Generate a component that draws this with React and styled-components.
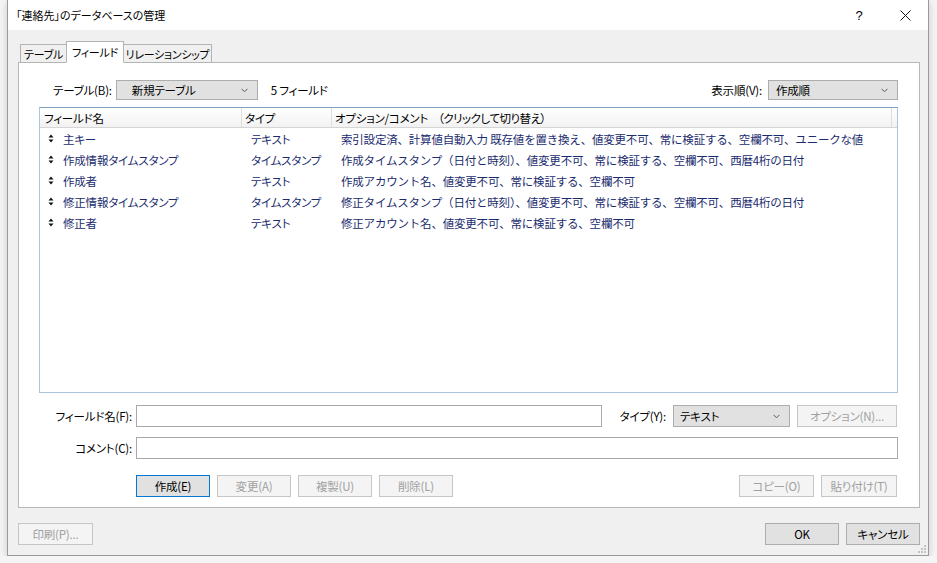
import React from 'react';
import styled, { createGlobalStyle } from 'styled-components';

const GlobalStyle = createGlobalStyle`
  *, *::before, *::after {
    box-sizing: border-box;
  }
  html, body {
    margin: 0;
    padding: 0;
    background: #f5f5f5;
  }
  body {
    font-family: "Noto Sans CJK JP", "Noto Sans", sans-serif;
    font-size: 11.5px;
    letter-spacing: -0.2px;
    font-feature-settings: "palt";
    color: #000;
  }
`;

const StyledWindow = styled.div`
  position: relative;
  width: 922px;
  margin-left: 7px;
  border: 1px solid #9a9a9a;
  border-top: none;
  background: #f0f0f0;
  box-shadow: 0 2px 8px rgba(0, 0, 0, 0.18);
`;

const StyledTitleBar = styled.div`
  display: flex;
  align-items: center;
  height: 30px;
  background: #fff;
  padding-left: 8px;
`;

const StyledTitle = styled.span`
  flex: 1;
  font-size: 11px;
  letter-spacing: 0;
`;

const StyledTitleButton = styled.div`
  display: flex;
  align-items: center;
  justify-content: center;
  width: 46px;
  height: 30px;
  font-family: "Liberation Sans", sans-serif;
  font-size: 13px;
`;

const StyledBody = styled.div`
  padding: 11px 8px 10px 10px;
`;

const StyledTabStrip = styled.div`
  display: flex;
  align-items: flex-end;
  height: 22px;
  margin: 0 0 -1px 2px;
  position: relative;
  z-index: 1;
`;

const StyledTab = styled.div`
  display: flex;
  align-items: center;
  justify-content: center;
  width: ${({ $width }) => $width}px;
  height: ${({ $active }) => ($active ? '22px' : '19px')};
  font-size: 11px;
  letter-spacing: -0.3px;
  background: ${({ $active }) => ($active ? '#fff' : '#f0f0f0')};
  border: 1px solid #b4b4b4;
  border-bottom: ${({ $active }) => ($active ? '1px solid #fff' : '1px solid #b4b4b4')};
  margin-left: ${({ $active }) => ($active ? '-1px' : '0')};
  margin-right: ${({ $active }) => ($active ? '-1px' : '0')};
  position: relative;
  z-index: ${({ $active }) => ($active ? 2 : 1)};
`;

const StyledPanel = styled.div`
  display: flex;
  flex-direction: column;
  height: 446px;
  padding: 17px 21px 10px 20px;
  background: #fff;
  border: 1px solid #b8b8b8;
`;

const StyledTopRow = styled.div`
  display: flex;
  align-items: center;
  height: 20px;
  padding-left: 14px;
`;

const StyledLabel = styled.span`
  white-space: nowrap;
  margin-right: ${({ $gap }) => $gap || 4}px;
`;

const StyledSelect = styled.div`
  display: flex;
  align-items: center;
  width: ${({ $width }) => $width}px;
  height: ${({ $height }) => $height || 20}px;
  padding: 0 9px 0 ${({ $pad }) => $pad || 6}px;
  background: #e1e1e1;
  border: 1px solid #adadad;
  span {
    flex: 1;
  }
`;

const StyledCount = styled.span`
  margin-left: 13px;
`;

const StyledSpacer = styled.div`
  flex: 1;
`;

const StyledList = styled.div`
  display: flex;
  flex-direction: column;
  height: 286px;
  margin-top: 7px;
  border: 1px solid #aac6de;
  border-top-color: #7f9fc0;
  background: #fff;
`;

const StyledHeader = styled.div`
  display: grid;
  grid-template-columns: 202px 90px 560px;
  height: 20px;
  border-bottom: 1px solid #d5d5d5;
  background: linear-gradient(#ffffff, #f2f2f2);
`;

const StyledHeaderCell = styled.div`
  display: flex;
  align-items: center;
  padding-left: ${({ $pad }) => $pad || 3}px;
  border-right: 1px solid #dedede;
  white-space: nowrap;
  span {
    margin-left: 10px;
    letter-spacing: -0.5px;
  }
`;

const StyledRow = styled.div`
  display: grid;
  grid-template-columns: 202px 90px 1fr;
  align-items: center;
  height: 21px;
  color: #1b2c6e;
  white-space: nowrap;
`;

const StyledNameCell = styled.div`
  display: flex;
  align-items: center;
  gap: 9px;
  padding-left: 8px;
`;

const StyledCell = styled.div`
  padding-left: 9px;
`;

const StyledOptionCell = styled.div`
  padding-left: 9px;
  font-feature-settings: normal;
`;

const StyledFormRow = styled.div`
  display: flex;
  align-items: center;
  height: 22px;
  margin-top: ${({ $top }) => $top}px;
  padding-right: ${({ $right }) => $right || 0}px;
`;

const StyledFormLabel = styled.span`
  width: 93px;
  margin-right: 4px;
  text-align: right;
  white-space: nowrap;
`;

const StyledInput = styled.div`
  height: 22px;
  width: ${({ $width }) => ($width ? `${$width}px` : 'auto')};
  flex: ${({ $width }) => ($width ? 'none' : 1)};
  background: #fff;
  border: 1px solid #a9a9a9;
`;

const StyledButtonRow = styled.div`
  display: flex;
  align-items: center;
  gap: 7px;
  height: 22px;
  margin-top: 16px;
  padding-left: 97px;
  padding-right: 1px;
`;

const StyledButton = styled.div`
  display: flex;
  align-items: center;
  justify-content: center;
  width: ${({ $width }) => $width || 74}px;
  height: 22px;
  margin-left: ${({ $left }) => $left || 0}px;
  white-space: nowrap;
  background: ${({ $disabled }) => ($disabled ? '#f4f4f4' : '#e1e1e1')};
  border: 1px solid
    ${({ $disabled, $default }) =>
      $default ? '#0078d7' : $disabled ? '#c6c6c6' : '#adadad'};
  color: ${({ $disabled }) => ($disabled ? '#a0a0a0' : '#000')};
`;

const StyledFooter = styled.div`
  display: flex;
  align-items: center;
  gap: 7px;
  height: 22px;
  margin-top: 15px;
`;

const StyledGrip = styled.svg`
  position: absolute;
  right: 2px;
  bottom: 2px;
`;

const Chevron = () => (
  <svg width="7" height="5" viewBox="0 0 7 5">
    <path d="M0.5 0.8 L3.5 3.8 L6.5 0.8" fill="none" stroke="#5a5a5a" strokeWidth="1" />
  </svg>
);

const SortIcon = () => (
  <svg width="6" height="9" viewBox="0 0 6 9">
    <path d="M3 0.5 L5.5 3.5 L0.5 3.5 Z M3 8.5 L5.5 5.5 L0.5 5.5 Z" fill="#111" />
  </svg>
);

const CloseIcon = () => (
  <svg width="11" height="11" viewBox="0 0 11 11">
    <path d="M0.5 0.5 L10.5 10.5 M10.5 0.5 L0.5 10.5" stroke="#111" strokeWidth="1" />
  </svg>
);

const fields = [
  {
    name: '主キー',
    type: 'テキスト',
    options:
      '索引設定済、計算値自動入力 既存値を置き換え、値変更不可、常に検証する、空欄不可、ユニークな値',
  },
  {
    name: '作成情報タイムスタンプ',
    type: 'タイムスタンプ',
    options: '作成タイムスタンプ（日付と時刻）、値変更不可、常に検証する、空欄不可、西暦4桁の日付',
  },
  {
    name: '作成者',
    type: 'テキスト',
    options: '作成アカウント名、値変更不可、常に検証する、空欄不可',
  },
  {
    name: '修正情報タイムスタンプ',
    type: 'タイムスタンプ',
    options: '修正タイムスタンプ（日付と時刻）、値変更不可、常に検証する、空欄不可、西暦4桁の日付',
  },
  {
    name: '修正者',
    type: 'テキスト',
    options: '修正アカウント名、値変更不可、常に検証する、空欄不可',
  },
];

const gripDots = [
  [8, 0],
  [5, 3],
  [8, 3],
  [2, 6],
  [5, 6],
  [8, 6],
];

const App = () => (
  <>
    <GlobalStyle />
    <StyledWindow>
      <StyledTitleBar>
        <StyledTitle>「連絡先」のデータベースの管理</StyledTitle>
        <StyledTitleButton>?</StyledTitleButton>
        <StyledTitleButton>
          <CloseIcon />
        </StyledTitleButton>
      </StyledTitleBar>

      <StyledBody>
        <StyledTabStrip>
          <StyledTab $width={47}>テーブル</StyledTab>
          <StyledTab $active $width={58}>
            フィールド
          </StyledTab>
          <StyledTab $width={89}>リレーションシップ</StyledTab>
        </StyledTabStrip>

        <StyledPanel>
          <StyledTopRow>
            <StyledLabel>テーブル(B):</StyledLabel>
            <StyledSelect $width={142} $pad={15}>
              <span>新規テーブル</span>
              <Chevron />
            </StyledSelect>
            <StyledCount>5 フィールド</StyledCount>
            <StyledSpacer />
            <StyledLabel $gap={6}>表示順(V):</StyledLabel>
            <StyledSelect $width={130} $pad={7}>
              <span>作成順</span>
              <Chevron />
            </StyledSelect>
          </StyledTopRow>

          <StyledList>
            <StyledHeader>
              <StyledHeaderCell $pad={4}>フィールド名</StyledHeaderCell>
              <StyledHeaderCell>タイプ</StyledHeaderCell>
              <StyledHeaderCell>
                オプション/コメント<span>（クリックして切り替え）</span>
              </StyledHeaderCell>
            </StyledHeader>
            {fields.map((field) => (
              <StyledRow key={field.name}>
                <StyledNameCell>
                  <SortIcon />
                  <span>{field.name}</span>
                </StyledNameCell>
                <StyledCell>{field.type}</StyledCell>
                <StyledOptionCell>{field.options}</StyledOptionCell>
              </StyledRow>
            ))}
          </StyledList>

          <StyledFormRow $top={12} $right={1}>
            <StyledFormLabel>フィールド名(F):</StyledFormLabel>
            <StyledInput $width={466} />
            <StyledSpacer />
            <StyledLabel $gap={7}>タイプ(Y):</StyledLabel>
            <StyledSelect $width={117} $height={22} $pad={6}>
              <span>テキスト</span>
              <Chevron />
            </StyledSelect>
            <StyledButton $disabled $width={100} $left={7}>
              オプション(N)...
            </StyledButton>
          </StyledFormRow>

          <StyledFormRow $top={10}>
            <StyledFormLabel>コメント(C):</StyledFormLabel>
            <StyledInput />
          </StyledFormRow>

          <StyledButtonRow>
            <StyledButton $default>作成(E)</StyledButton>
            <StyledButton $disabled>変更(A)</StyledButton>
            <StyledButton $disabled>複製(U)</StyledButton>
            <StyledButton $disabled>削除(L)</StyledButton>
            <StyledSpacer />
            <StyledButton $disabled $width={75}>
              コピー(O)
            </StyledButton>
            <StyledButton $disabled $width={76}>
              貼り付け(T)
            </StyledButton>
          </StyledButtonRow>
        </StyledPanel>

        <StyledFooter>
          <StyledButton $disabled $width={75}>
            印刷(P)...
          </StyledButton>
          <StyledSpacer />
          <StyledButton>OK</StyledButton>
          <StyledButton>キャンセル</StyledButton>
        </StyledFooter>
      </StyledBody>

      <StyledGrip width="10" height="10" viewBox="0 0 10 10">
        {gripDots.map(([x, y]) => (
          <rect key={`${x}-${y}`} x={x} y={y + 2} width="2" height="2" fill="#c4c4c4" />
        ))}
      </StyledGrip>
    </StyledWindow>
  </>
);

export default App;
